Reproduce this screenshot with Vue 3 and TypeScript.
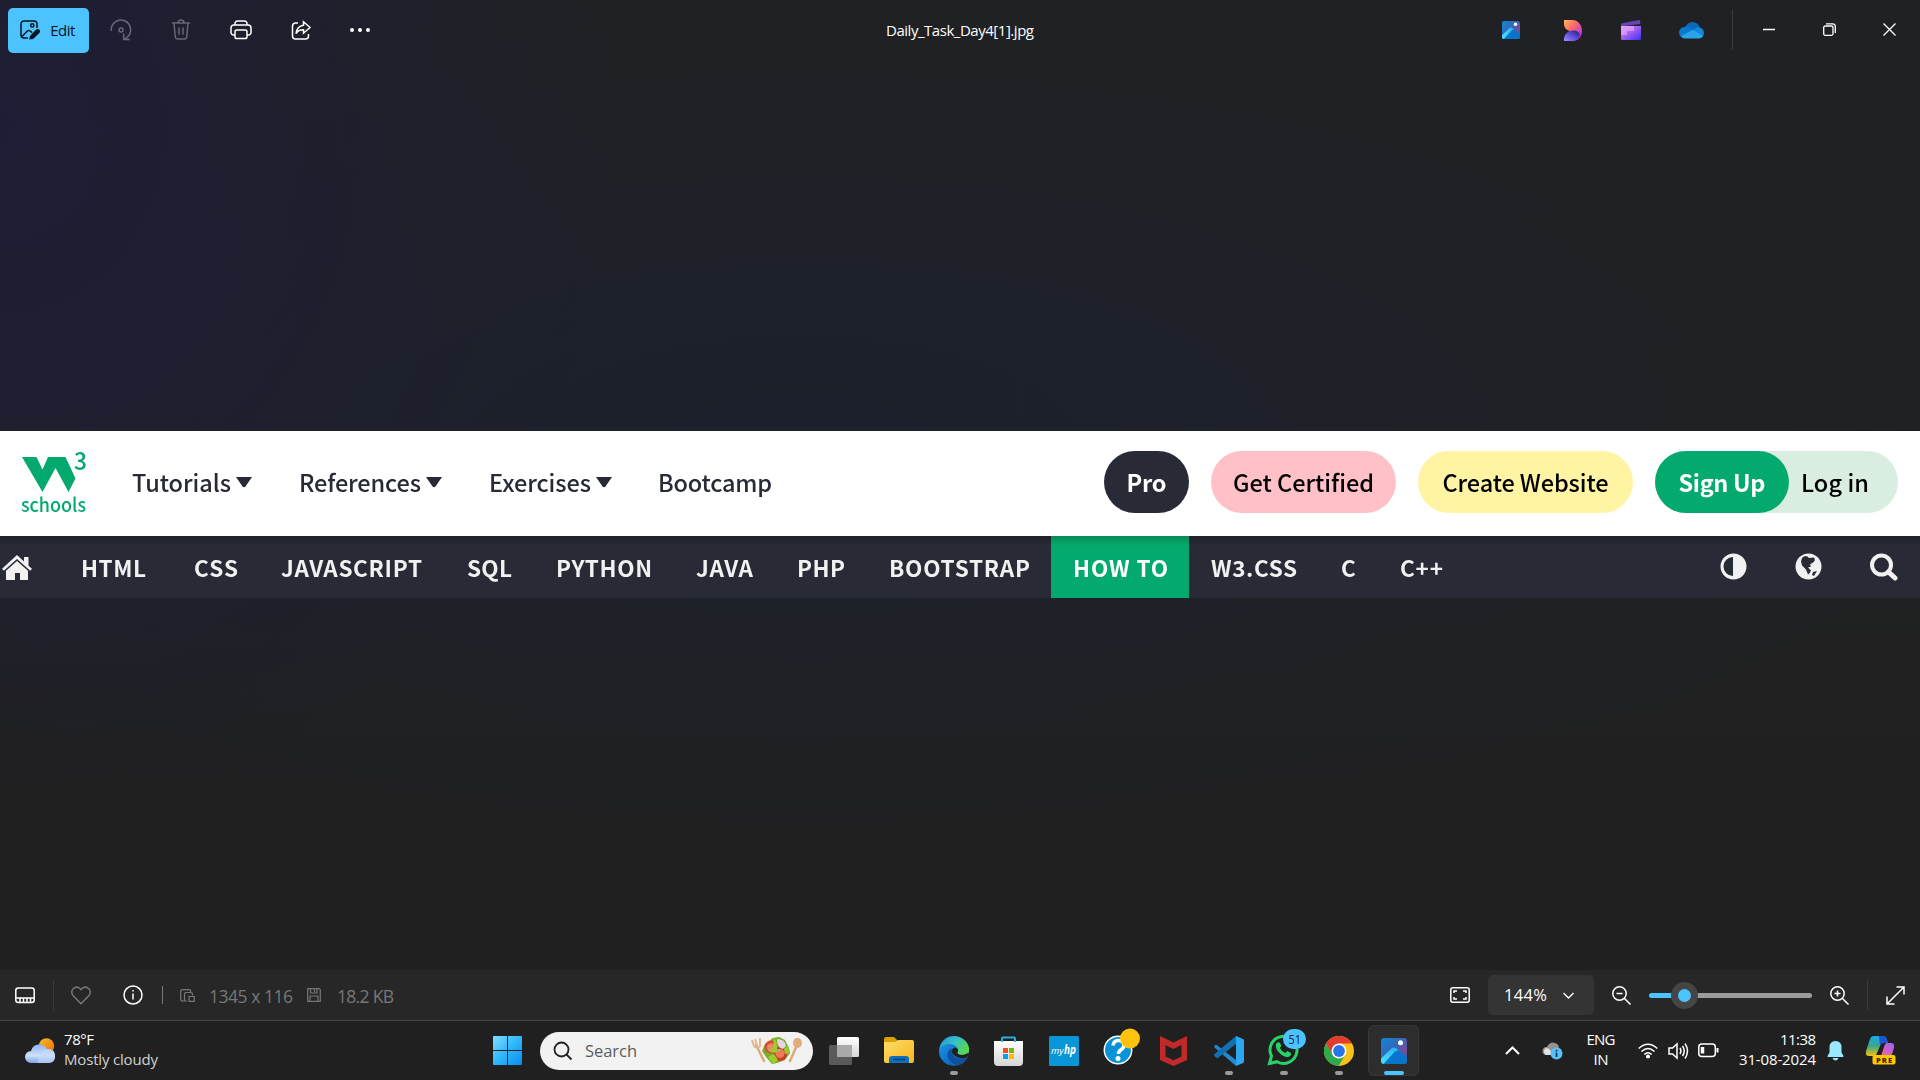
<script setup lang="ts">
interface Label {
  text: string
  gap: number
  width: number
}

const menus: (Label & { caret: number })[] = [
  { text: 'Tutorials', gap: 0, width: 99, caret: 16 },
  { text: 'References', gap: 47, width: 122, caret: 16 },
  { text: 'Exercises', gap: 47, width: 102, caret: 16 },
  { text: 'Bootcamp', gap: 46, width: 114, caret: 0 },
]

const topics: (Label & { active?: boolean })[] = [
  { text: 'HTML', gap: 48, width: 65 },
  { text: 'CSS', gap: 48, width: 44 },
  { text: 'JAVASCRIPT', gap: 43, width: 141 },
  { text: 'SQL', gap: 45, width: 45 },
  { text: 'PYTHON', gap: 44, width: 96 },
  { text: 'JAVA', gap: 44, width: 57 },
  { text: 'PHP', gap: 44, width: 48 },
  { text: 'BOOTSTRAP', gap: 44, width: 141 },
  { text: 'HOW TO', gap: 43, width: 95, active: true },
  { text: 'W3.CSS', gap: 43, width: 86 },
  { text: 'C', gap: 44, width: 16 },
  { text: 'C++', gap: 43, width: 43 },
]

// Spreads or tightens the letters so that a label fills its own box.
const vFit = {
  mounted(el: HTMLElement) {
    const range = document.createRange()
    range.selectNodeContents(el)
    const natural = range.getBoundingClientRect().width
    const count = (el.textContent ?? '').trim().length
    if (count > 1) {
      el.style.letterSpacing = `${(el.clientWidth - natural) / (count - 1)}px`
    }
  },
}
</script>

<template>
  <div class="desktop">
    <header class="titlebar">
      <button class="edit">
        <svg width="21" height="21" viewBox="0 0 21 21">
          <path d="M8 18H4a3 3 0 0 1-3-3V4a3 3 0 0 1 3-3h10a3 3 0 0 1 3 3v4" />
          <circle cx="12.3" cy="5.4" r="1.6" />
          <path d="M2 16.5 7.3 11q1.500-1.200 3 0l1.800 1.700" />
          <path d="M9 19.600l1.200-3.800 6-6.200q2-1.200 3.400.3 1.200 1.600-.2 3l-6.300 6z" fill="#06141c" stroke="none" />
        </svg>
        <span v-fit class="w25">Edit</span>
      </button>
      <div class="cells commands">
        <span class="cell dim">
          <svg width="22" height="22" viewBox="0 0 22 22">
            <path d="M1.3 12A9.7 9.7 0 1 1 17 18.3l-3 2.2M13.7 14.5v6h6" />
            <circle cx="11" cy="11" r="2" />
          </svg>
        </span>
        <span class="cell dim">
          <svg width="20" height="22" viewBox="0 0 20 22">
            <path d="M1 4h18M7 4a3 3 0 0 1 6 0M3 4l1.3 14q.3 2 2.2 2h7q2 0 2.2-2L17 4M8 8.5v7M12 8.5v7" />
          </svg>
        </span>
        <span class="cell">
          <svg width="22" height="20" viewBox="0 0 22 20">
            <path d="M5 5V3.500A2.500 2.500 0 0 1 7.500 1h7A2.500 2.500 0 0 1 17 3.500V5M5 15H3.500A2.500 2.500 0 0 1 1 12.500V8a3 3 0 0 1 3-3h14a3 3 0 0 1 3 3v4.500A2.500 2.500 0 0 1 18.500 15H17" />
            <rect x="5" y="10" width="12" height="8.500" rx="1.800" />
          </svg>
        </span>
        <span class="cell">
          <svg width="21" height="21" viewBox="0 0 21 21">
            <path d="M7 3H4.500A3 3 0 0 0 1.500 6v10a3 3 0 0 0 3 3h10a3 3 0 0 0 3-3v-2M12.500 1.800l6.500 5.700-6.500 5.700V9.800q-5-.2-7.500 3.700 1-7.500 7.500-8.300z" />
          </svg>
        </span>
        <span class="cell dots">
          <svg class="solid" width="22" height="6" viewBox="0 0 22 6">
            <circle cx="3" cy="3" r="2" /><circle cx="11" cy="3" r="2" /><circle cx="19" cy="3" r="2" />
          </svg>
        </span>
      </div>
      <div class="filename"><span v-fit class="w148">Daily_Task_Day4[1].jpg</span></div>
      <div class="cells">
        <span class="cell">
          <svg class="art" width="18" height="18" viewBox="0 0 26 26"><use href="#photos" /></svg>
        </span>
        <span class="cell nudge">
          <svg class="art" width="18" height="21" viewBox="0 0 18 21">
            <path d="M0 0h8c6 0 10 5 10 10.500S15 21 8 21L5 10.800Q0 9 0 4z" fill="url(#designerTop)" />
            <path d="M0 21C-.5 14 4 10.500 9 10.500S16.500 13 15.500 17Q13 21 7 21z" fill="url(#designerLow)" />
          </svg>
        </span>
        <span class="cell">
          <svg class="art" width="20" height="21" viewBox="0 0 20 21">
            <path d="M0 4.500Q0 3.500 1 3.200L18 0q1-.1 1.200 1v3L0 6.500z" fill="#6644b8" />
            <path d="M0 6h20v12.500q0 1.500-1.500 1.500h-17Q0 20 0 18.500z" fill="url(#clip)" />
            <path d="M0 6h13v5H0zM0 11h6v4H0z" fill="#efb4ff" opacity=".55" />
          </svg>
        </span>
        <span class="cell">
          <svg class="art" width="25" height="17" viewBox="0 0 25 17"><use href="#onedrive" /></svg>
        </span>
      </div>
      <i class="rule tall"></i>
      <div class="cells window">
        <span class="cell"><svg width="12" height="12" viewBox="0 0 12 12"><path d="M0 6.500h12" /></svg></span>
        <span class="cell">
          <svg class="thin" width="13" height="13" viewBox="0 0 13 13">
            <rect x=".7" y="3" width="9.300" height="9.300" rx="1.500" />
            <path d="M3 .8h6.500q2.800 0 2.800 2.800V10" />
          </svg>
        </span>
        <span class="cell"><svg class="thin" width="13" height="13" viewBox="0 0 13 13"><path d="M.5.5l12 12M12.500.5l-12 12" /></svg></span>
      </div>
    </header>

    <main class="canvas">
      <section class="picture">
        <div class="site">
          <svg class="logo" width="68" height="66" viewBox="0 0 68 66">
            <path d="M1 7h14.500l6 12.500L27 7h17.500l10 21.500L47.500 42 34.500 18 21.500 42z" fill="#04aa6d" />
            <text x="53" y="19.500" font-size="25" textLength="13" lengthAdjust="spacingAndGlyphs">3</text>
            <text x="0" y="62" font-size="19" textLength="65" lengthAdjust="spacingAndGlyphs">schools</text>
          </svg>
          <div class="menus">
            <span v-for="m in menus" :key="m.text" class="menu" :style="{ marginLeft: m.gap + 'px' }">
              <span v-fit class="word" :style="{ width: m.width + 'px' }">{{ m.text }}</span>
              <svg v-if="m.caret" :width="m.caret" height="11" viewBox="0 0 16 11"><path d="M0 0h16L9.500 9.500q-1.500 1.500-3 0z" fill="#282a35" /></svg>
            </span>
          </div>
          <div class="pills">
            <span class="pill pro"><span v-fit class="word">Pro</span></span>
            <span class="pill cert"><span v-fit class="word">Get Certified</span></span>
            <span class="pill create"><span v-fit class="word">Create Website</span></span>
            <span class="account">
              <span class="pill signup"><span v-fit class="word">Sign Up</span></span>
              <span class="login"><span v-fit class="word">Log in</span></span>
            </span>
          </div>
        </div>
        <nav class="topics">
          <svg class="home" width="30" height="25" viewBox="0 0 30 25">
            <path d="M15 0 22 6.500V2h4.500v8.700l3.500 3.100-1.800 2L15 4 1.800 15.800 0 13.800z" />
            <path d="M15 6 26 15.800V25h-8v-7h-5v7H4v-9.200z" />
          </svg>
          <span
            v-for="t in topics"
            :key="t.text"
            class="topic"
            :class="{ active: t.active }"
            :style="{ paddingLeft: t.gap - 21 + 'px' }"
          ><span v-fit class="word" :style="{ width: t.width + 'px' }">{{ t.text }}</span></span>
          <div class="tools">
            <svg width="27" height="27" viewBox="0 0 27 27">
              <path fill-rule="evenodd" d="M13.500.5a13 13 0 1 0 0 26 13 13 0 0 0 0-26zM13 4v19a9.500 9.500 0 0 1 0-19z" />
            </svg>
            <svg width="27" height="27" viewBox="0 0 27 27">
              <circle cx="13.500" cy="13.500" r="13" />
              <path class="land" d="M7 5q4-4 7 0l5-.5q2 3-1 5l-3 2 1 2-3 1 3 3q-1 3-3 4l-2-5-4-4-1-4zM18 19l4-1-3 5-2-1z" />
            </svg>
            <svg width="29" height="28" viewBox="0 0 29 28">
              <circle class="ring" cx="11.500" cy="12" r="9.500" />
              <path class="handle" d="m18.500 19 6.500 6" />
            </svg>
          </div>
        </nav>
      </section>
    </main>

    <footer class="status">
      <span class="cell film">
        <svg width="20" height="17" viewBox="0 0 20 17">
          <rect x=".8" y="1" width="18.400" height="14.500" rx="2.500" />
          <path d="M1 11h18M5 11v4M8.500 11v4M12 11v4M15.500 11v4" />
        </svg>
      </span>
      <i class="rule short"></i>
      <svg class="heart" width="20" height="19" viewBox="0 0 20 19">
        <path d="M10 17.800 2.200 9.800a4.900 4.900 0 0 1 0-7q3.500-3.300 7 0l.8.900.8-.9q3.500-3.300 7 0a4.900 4.900 0 0 1 0 7z" />
      </svg>
      <svg class="info" width="20" height="20" viewBox="0 0 20 20">
        <circle cx="10" cy="10" r="9" /><path d="M10 8.500v6M10 5v1.600" />
      </svg>
      <i class="rule light"></i>
      <svg class="resize faint" width="15" height="13" viewBox="0 0 15 13">
        <path d="M7 12H2.500Q.7 12 .7 10V2.800Q.7.7 2.700.7H9q1.700 0 1.700 1.800v1M4.500 12V5q0-1.500 1.500-1.500h5q1.500 0 1.500 1.500v1.500M9 7.500h5.300v4.800H9z" />
      </svg>
      <span v-fit class="meta dims">1345 x 116</span>
      <svg class="disk faint" width="14" height="14" viewBox="0 0 14 14">
        <path d="M.7.7h11.600l1 1v11.600H.7zM3.500.7V5h6.500V.7M3 13V8h8v5M7.500 1.500V4" />
      </svg>
      <span v-fit class="meta size">18.2 KB</span>
      <div class="zoom">
        <svg width="20" height="16" viewBox="0 0 20 16">
          <rect x=".8" y=".8" width="18.400" height="14.400" rx="2" />
          <path d="M4 6V4h3M13 4h3v2M16 10v2h-3M7 12H4v-2" />
        </svg>
        <span class="percent">
          <span v-fit>144%</span>
          <svg class="thin chev" width="11" height="7" viewBox="0 0 11 7"><path d="m.5 1 5 5 5-5" /></svg>
        </span>
        <svg class="lens" width="19" height="19" viewBox="0 0 19 19"><circle cx="7.500" cy="7.500" r="6.700" /><path d="m12.500 12.500 6 6M4.500 7.500h6" /></svg>
        <span class="slider"><i class="track"></i><i class="thumb"></i></span>
        <svg class="lens plus" width="19" height="19" viewBox="0 0 19 19"><circle cx="7.500" cy="7.500" r="6.700" /><path d="m12.500 12.500 6 6M4.500 7.500h6M7.500 4.500v6" /></svg>
        <i class="rule short"></i>
        <svg class="expand" width="19" height="19" viewBox="0 0 19 19"><path d="M1 18 18 1M10.500 1H18v7.500M1 10.500V18h7.500" /></svg>
      </div>
    </footer>

    <div class="taskbar">
      <div class="weather">
        <svg class="art" width="31" height="26" viewBox="0 0 31 26">
          <circle cx="21.500" cy="8" r="7.700" fill="url(#sun)" />
          <path d="M6 25a6 6 0 0 1 0-12Q8 5.500 15 6.500q5 .5 7 4.500 7-1 8 6t-6 8z" fill="url(#cloud)" />
          <path d="M15 18q2-7 8-7 7 .5 7 7-.5 6-6 7H12z" fill="#c4d8fa" opacity=".6" />
        </svg>
        <div class="lines"><span v-fit class="w30">78°F</span><span v-fit class="w94 soft">Mostly cloudy</span></div>
      </div>
      <svg class="art start" width="29" height="29" viewBox="0 0 29 29">
        <path d="M0 1q0-1 1-1h13v14H0zM15 0h13q1 0 1 1v13H15zM0 15h14v14H1q-1 0-1-1zM15 15h14v13q0 1-1 1H15z" fill="url(#win)" />
      </svg>
      <div class="search">
        <svg width="20" height="20" viewBox="0 0 20 20"><circle cx="8.500" cy="8.500" r="7" /><path d="m13.500 13.500 5 5" /></svg>
        <span v-fit class="w52">Search</span>
        <svg class="art salad" width="52" height="28" viewBox="0 0 52 28">
          <path d="m5 8 8 16" stroke="#e0a878" stroke-width="2.500" stroke-linecap="round" />
          <path d="m1 3 2 6q3 3 6 0V1M4 2l2 6" fill="none" stroke="#e8b68c" stroke-width="2" />
          <path d="m46 8-7 16" stroke="#e0a878" stroke-width="2.500" stroke-linecap="round" />
          <ellipse cx="46.500" cy="6" rx="4.500" ry="5" fill="#e3aa7a" />
          <path d="M14 7 22 1l6-1 6 3 4 8 1 5-5 7-8 3-5 1-6-7-4-6z" fill="#78ae25" />
          <circle cx="20" cy="10" r="6.500" fill="#d94a32" /><circle cx="20" cy="10.500" r="4" fill="#ee8763" />
          <circle cx="29" cy="17" r="7" fill="#c83c29" /><circle cx="29" cy="16.500" r="4.500" fill="#ed7b5a" />
          <path d="M26 2q8 0 9 7l-3 3q-6-1-6-10z" fill="#e9d2e5" /><path d="M23 1q4 5 3 11l5 1-8 3-6-2 5-3zM17 20l6-3 4 6-5 4zM33 12l4-3 1 7-4 1z" fill="#9bcd32" />
        </svg>
      </div>
      <div class="apps">
        <span class="app">
          <svg class="art" width="30" height="28" viewBox="0 0 30 28">
            <rect x="8" y="0" width="22" height="20" rx="1.500" fill="url(#paper)" />
            <rect x="0" y="8" width="23" height="20" rx="1.500" fill="#5a5a5a" /><path d="M8 8h15v12H8z" fill="#a9a9a9" />
          </svg>
        </span>
        <span class="app">
          <svg class="art" width="30" height="27" viewBox="0 0 30 27">
            <path d="M0 2Q0 0 2 0h8l3 3v6H0z" fill="#dea000" /><path d="M0 5h11l3-2h14q2 0 2 2v19q0 2-2 2H2q-2 0-2-2z" fill="url(#folder)" />
            <path d="M5 26v-4q0-3 3-3h14q3 0 3 3v4z" fill="#0c70bf" /><path d="M9 22.500h12" stroke="#073d6e" stroke-width="1.500" />
          </svg>
        </span>
        <span class="app open">
          <svg class="art" width="30" height="30" viewBox="0 0 30 30">
            <circle cx="15" cy="15" r="15" fill="url(#edgeBlue)" />
            <path d="M1 11C4 1 14-2 22 2c7 3 10 11 7 16-2 3-7 4-11 2-1-1 1-2 1-5 0-4-4-7-8-7-5 0-9 2-10 5z" fill="url(#edgeGreen)" />
            <path d="M12 12q-5 5-3 10 3 6 10 7 6-1 9-7-10 4-14-3-2-3-2-7z" fill="#12509b" />
            <path d="M30 18q-1 5-9 4-8-2-8.500-7.500 2-4 5-2.500 3 2 .5 5 4 4 11 0z" fill="#202020" />
          </svg>
        </span>
        <span class="app">
          <svg class="art" width="29" height="30" viewBox="0 0 29 30">
            <path d="M0 5h29v21q0 4-4 4H4q-4 0-4-4z" fill="url(#paper)" />
            <path d="M8 6V2.500q0-1 1-1h11q1 0 1 1V6" fill="none" stroke="#2aaee6" stroke-width="2" />
            <path d="M9 12h5v5H9z" fill="#f25022" /><path d="M15 12h5v5h-5z" fill="#7fba00" /><path d="M9 18h5v5H9z" fill="#00a4ef" /><path d="M15 18h5v5h-5z" fill="#ffb900" />
          </svg>
        </span>
        <span class="app">
          <svg class="art" width="30" height="30" viewBox="0 0 30 30">
            <rect width="30" height="30" rx="1.500" fill="#0896d7" />
            <text x="2" y="18" class="my" textLength="12.500" lengthAdjust="spacingAndGlyphs">my</text>
            <text x="15" y="18" class="hp" textLength="12" lengthAdjust="spacingAndGlyphs">hp</text>
          </svg>
        </span>
        <span class="app">
          <svg class="art help" width="38" height="38" viewBox="0 0 38 38">
            <circle cx="18" cy="22" r="13.700" fill="#0793d5" stroke="#fff" stroke-width="1.500" />
            <path d="M13 17.500q.5-5 5.500-5t5.500 4.500q0 3-3 4.800-2.500 1.500-2.500 4.200" fill="none" stroke="#fff" stroke-width="3.600" />
            <circle cx="18" cy="30.500" r="2.500" fill="#fff" />
            <circle cx="30" cy="10.500" r="10" fill="#ffc20e" />
          </svg>
        </span>
        <span class="app">
          <svg class="art" width="27" height="30" viewBox="0 0 27 30"><path d="M0 0l13.500 6.500L27 0v24l-13.500 6L0 24zM5.500 9v11.500l8 3.700 8-3.700V9l-8 4z" fill="#c12a2b" fill-rule="evenodd" /></svg>
        </span>
        <span class="app open">
          <svg class="art" width="30" height="30" viewBox="0 0 30 30">
            <path d="M2 8.500 22 24v6L.5 11.500Q-.5 10 2 8.500z" fill="#2489ca" /><path d="M2 21.500.5 20q-1-1 0-2L22 0v8L4.500 21.500q-1 1-2.500 0z" fill="#1070b3" />
            <path d="M22 0l7 3q1 .5 1 2v20q0 1.500-1 2l-7 3z" fill="#2aa8f2" />
          </svg>
        </span>
        <span class="app open">
          <svg class="art wa" width="40" height="38" viewBox="0 0 40 38">
            <path d="M6.500 35.500l2-7.500A13.500 13.500 0 1 1 14 33.700z" fill="none" stroke="#25d366" stroke-width="3" />
            <path d="M13 16q2-3 4-1l1.300 3-1.500 2q2 3.800 5.500 5l2-2 3.700 2q.5 3-3 4-4 .5-8.500-4T13 16z" fill="#25d366" />
            <rect x="20" y="1" width="23" height="20" rx="10" fill="#4cc2ff" />
            <text x="25.500" y="16" class="count" textLength="12.500" lengthAdjust="spacingAndGlyphs">51</text>
          </svg>
        </span>
        <span class="app open">
          <svg class="art" width="30" height="30" viewBox="0 0 30 30">
            <circle cx="15" cy="15" r="15" fill="#fbc116" /><path d="M2 7.500A15 15 0 0 1 28 7.500H15L8.500 19z" fill="#e33b2e" /><path d="M2 7.500a15 15 0 0 0 12.500 22.500l7-11.500h-13z" fill="#2da94f" />
            <circle cx="15" cy="15" r="7.500" fill="#fff" /><circle cx="15" cy="15" r="5.900" fill="#2a74ea" />
          </svg>
        </span>
        <span class="app open current"><svg class="art" width="26" height="26" viewBox="0 0 26 26"><use href="#photos" /></svg></span>
      </div>
      <div class="tray">
        <svg class="up" width="15" height="9" viewBox="0 0 15 9"><path d="m1 8 6.500-6.500L14 8" stroke-width="2" /></svg>
        <svg class="art sync" width="21" height="18" viewBox="0 0 21 18">
          <path d="M4 13a4 4 0 0 1 1-8Q8-1 13 1q4 1 4 5 3 1 2 4l-5 3z" fill="#929292" /><path d="M4 13a4 4 0 0 1 0-7q5 0 6 7z" fill="#e2e2e2" />
          <circle cx="14.500" cy="11.500" r="6" fill="#58c1fb" /><path d="M14.500 10.500v4.500M14.500 7.800v1.600" stroke="#083b58" stroke-width="1.700" />
        </svg>
        <div class="lines lang"><span v-fit class="w29">ENG</span><span v-fit class="w15">IN</span></div>
        <svg class="wifi" width="20" height="16" viewBox="0 0 20 16"><path d="M.7 5.500q9.300-8.500 18.600 0M3.500 8.500q6.500-6 13 0M6.300 11.500q3.700-3.500 7.400 0" /><circle cx="10" cy="13.500" r="1.300" fill="#fff" /></svg>
        <svg class="vol" width="21" height="18" viewBox="0 0 21 18"><path d="M1 6h3.500L9 2v14l-4.500-4H1zM12 6q2 3 0 6M14.500 4q3.500 5 0 10M17 1.500q5 7.500 0 15" /></svg>
        <svg class="bat" width="21" height="15" viewBox="0 0 21 15"><rect x=".8" y="1" width="16.500" height="12.500" rx="3" /><path d="M19.500 5v4.500" stroke-width="2" /><path d="M4.500 4v6.500" stroke-width="3.500" /></svg>
        <div class="lines clock"><span v-fit class="w36">11:38</span><span v-fit class="w77">31-08-2024</span></div>
        <svg class="art bell" width="17" height="20" viewBox="0 0 17 20"><path d="M8.500 0q6 0 6 6.500v5l2 3.500q.5 1-1 1h-14q-1.500 0-1-1l2-3.500v-5Q2.500 0 8.500 0zM5.500 17h6q-1 2.500-3 2.500t-3-2.500z" fill="#99e8fd" /></svg>
        <svg class="art copilot" width="30" height="30" viewBox="0 0 30 30">
          <path d="M8 0h9q3 0 4 4l1 3h-5q-2 0-3 3l-3 7q-1 3-4 3H3q-4 0-3-5L4 3q1-3 4-3z" fill="url(#copA)" />
          <path d="M21 7h4q4 0 3 5l-3 9q-1 4-5 4h-9q3-1 4-5l3-9q1-4 3-4z" fill="url(#copB)" />
          <path d="M13 0h4q3 0 4 4l1 3h-5q-2 0-3 3z" fill="#1c55d2" />
          <rect x="6.500" y="19" width="23" height="9.500" rx="2" fill="#ffc900" />
          <text x="10" y="26.500" class="pre" textLength="16">PRE</text>
        </svg>
      </div>
    </div>

    <svg class="defs" width="0" height="0">
      <defs>
        <linearGradient id="photoBg" x1="0" y1="0" x2="1" y2="1"><stop stop-color="#0b8bd8" /><stop offset=".45" stop-color="#3a64b6" /><stop offset=".7" stop-color="#74509d" /><stop offset="1" stop-color="#1768b8" /></linearGradient>
        <linearGradient id="peak" x1="0" y1="1" x2="1" y2="0"><stop stop-color="#4fe2ff" /><stop offset="1" stop-color="#23b1ee" /></linearGradient>
        <symbol id="photos" viewBox="0 0 26 26">
          <rect width="26" height="26" rx="3" fill="url(#photoBg)" />
          <path d="M2 25 11.500 10.500q2-2 4 0L26 19.500V23q0 3-3 3H3z" fill="#0874cc" />
          <path d="M0 20.500 10.500 10.500q2.500-2 5 0l2 2q-2-.5-4 1.500L2.500 26Q0 25.500 0 23z" fill="url(#peak)" />
          <circle cx="19.500" cy="4.800" r="2.500" fill="#fff" />
        </symbol>
        <symbol id="onedrive" viewBox="0 0 25 17">
          <path d="M6 5q3-5 8-5 6 1 7 6l-9 6z" fill="#0b68b8" /><path d="M6 5q4-1 7 2l8 9H6q-6 0-6-6 1-5 6-5z" fill="#0c79d0" />
          <path d="M14 8q4-4 8-2 4 2 2.500 7-1 3-4.500 3l-9-5z" fill="#1487da" /><path d="M2 14 14 8l10 6q-1.500 2.500-4 2.500H6q-3 0-4-2.500z" fill="#28a5ea" />
        </symbol>
        <linearGradient id="designerTop" x1="0" y1="0" x2="1" y2="1"><stop stop-color="#ffb84d" /><stop offset=".4" stop-color="#ff6a68" /><stop offset=".8" stop-color="#b838db" /></linearGradient>
        <linearGradient id="designerLow" x1="0" y1="1" x2="1" y2="0"><stop stop-color="#a98cff" /><stop offset=".5" stop-color="#5c4edb" /><stop offset="1" stop-color="#261a6a" /></linearGradient>
        <linearGradient id="clip" x1="0" y1="0" x2="1" y2="1"><stop stop-color="#e58cf5" /><stop offset=".5" stop-color="#9a5df2" /><stop offset="1" stop-color="#3d2ff0" /></linearGradient>
        <linearGradient id="sun" x1="0" y1="0" x2="1" y2="1"><stop stop-color="#f6bd2c" /><stop offset="1" stop-color="#ee6a05" /></linearGradient>
        <linearGradient id="cloud" x1="0" y1="0" x2="0" y2="1"><stop stop-color="#8db3f2" /><stop offset=".6" stop-color="#cfe0fb" /><stop offset="1" stop-color="#7fa5e8" /></linearGradient>
        <linearGradient id="win" x1="0" y1="0" x2="1" y2="1"><stop stop-color="#83dcff" /><stop offset=".5" stop-color="#2db8fb" /><stop offset="1" stop-color="#0a8dec" /></linearGradient>
        <linearGradient id="paper" x1="0" y1="0" x2="0" y2="1"><stop stop-color="#fff" /><stop offset="1" stop-color="#d5d5d5" /></linearGradient>
        <linearGradient id="folder" x1="0" y1="0" x2="1" y2="1"><stop stop-color="#ffdd6d" /><stop offset="1" stop-color="#f8b51c" /></linearGradient>
        <linearGradient id="edgeBlue" x1="0" y1="0" x2="1" y2="1"><stop stop-color="#249cde" /><stop offset=".5" stop-color="#0d78d2" /><stop offset="1" stop-color="#104a94" /></linearGradient>
        <linearGradient id="edgeGreen" x1="0" y1="0" x2="1" y2=".5"><stop stop-color="#2196d6" /><stop offset=".5" stop-color="#35bfc9" /><stop offset="1" stop-color="#5ad94a" /></linearGradient>
        <linearGradient id="copA" x1="0" y1="0" x2="0" y2="1"><stop stop-color="#1ca8ee" /><stop offset=".5" stop-color="#39a688" /><stop offset="1" stop-color="#f2c30f" /></linearGradient>
        <linearGradient id="copB" x1="1" y1="0" x2="0" y2="1"><stop stop-color="#9a62f4" /><stop offset=".5" stop-color="#d862bd" /><stop offset="1" stop-color="#ff8050" /></linearGradient>
      </defs>
    </svg>
  </div>
</template>

<style>
body {
  margin: 0;
  background: #202020;
}
</style>

<style scoped>
.desktop {
  width: 1920px;
  height: 1080px;
  display: flex;
  flex-direction: column;
  overflow: hidden;
  color: #fff;
  font: 15px/20px 'Open Sans', 'Noto Sans', sans-serif;
  background:
    radial-gradient(ellipse 620px 700px at 0 130px, rgba(29, 29, 56, 0.9), transparent),
    radial-gradient(ellipse 1150px 430px at 800px 440px, rgba(27, 32, 46, 0.85), transparent),
    linear-gradient(#202124, #202122 55%, #202020 75%);
}
span,
svg,
i {
  flex: none;
}
span {
  display: block;
  white-space: nowrap;
}
svg {
  display: block;
  fill: none;
  stroke: #fff;
  stroke-width: 1.5;
  overflow: visible;
}
svg.art,
svg.solid,
.picture svg {
  stroke: none;
}
svg.solid {
  fill: #fff;
}
svg.thin {
  stroke-width: 1.3;
}
.defs {
  position: absolute;
}
.w15 { width: 15px; }
.w25 { width: 25px; }
.w29 { width: 29px; }
.w30 { width: 30px; }
.w36 { width: 36px; }
.w52 { width: 52px; }
.w77 { width: 77px; }
.w94 { width: 94px; }
.w148 { width: 148px; }

.titlebar {
  height: 60px;
  display: flex;
  align-items: center;
}
.edit {
  width: 81px;
  height: 45px;
  margin: 0 2px 0 8px;
  padding: 0 0 0 12px;
  display: flex;
  align-items: center;
  gap: 9px;
  border: 0;
  border-radius: 5px;
  background: #4cc2ff;
  color: #06141c;
  font: inherit;
}
.edit svg {
  stroke: #06141c;
}
.cells {
  display: flex;
  align-items: center;
}
.cell {
  width: 60px;
  display: flex;
  align-items: center;
  justify-content: center;
}
.cell.nudge {
  padding-left: 4px;
  box-sizing: border-box;
}
.cell.dots {
  width: 57px;
}
.dim svg {
  stroke: #686777;
}
.filename {
  margin-left: 498px;
  flex: 1;
}
.rule {
  width: 1px;
  background: #3a3a3a;
}
.rule.tall {
  height: 40px;
  margin: 0 6px 0 11px;
}
.window {
  margin: 0 1px 2px 0;
}

.canvas {
  height: 910px;
  display: flex;
  flex-direction: column;
}
.picture {
  margin-top: 371px;
  height: 167px;
  font: 500 23.5px/30px 'Noto Sans CJK SC', 'Noto Sans', sans-serif;
}
.site {
  height: 105px;
  display: flex;
  background: #fff;
  color: #282a35;
}
.picture .word,
.picture svg {
  filter: blur(0.35px);
}
.site .word {
  margin-bottom: 1px;
}
.logo {
  margin: 19px 0 0 21px;
}
.logo text {
  fill: #04aa6d;
  font-weight: 500;
}
.menus {
  margin: 20px 0 0 43px;
  height: 62px;
  display: flex;
  flex: 1;
}
.menu {
  display: flex;
  align-items: center;
  gap: 5px;
}
.pills {
  margin: 20px 22px 0 0;
  height: 62px;
  display: flex;
  gap: 22px;
}
.pill,
.login {
  display: flex;
  align-items: center;
  justify-content: center;
  box-sizing: border-box;
  border-radius: 31px;
  color: #000;
}
.pill.pro {
  width: 85px;
  background: #282a35;
  color: #fff;
  font-weight: 700;
}
.pro .word { width: 40px; }
.cert {
  width: 185px;
  background: #ffc0c7;
}
.cert .word { width: 141px; }
.create {
  width: 215px;
  background: #fff4a3;
}
.create .word { width: 166px; }
.account {
  display: flex;
  width: 243px;
  border-radius: 31px;
  background: #d9eee1;
}
.pill.signup {
  width: 134px;
  background: #04aa6d;
  color: #fff;
  font-weight: 700;
}
.signup .word { width: 87px; }
.login {
  margin-left: 12px;
}
.login .word { width: 68px; }
.topics {
  height: 62px;
  display: flex;
  align-items: center;
  background: linear-gradient(#20212a, #282a35 10px);
  color: #f1f1f1;
  font-weight: 700;
  font-size: 22.5px;
}
.topics svg {
  fill: #f1f1f1;
}
.topics .land {
  fill: #282a35;
}
.ring,
.handle {
  fill: none;
  stroke: #f1f1f1;
  stroke-width: 4;
}
.handle {
  stroke-width: 5;
  stroke-linecap: round;
}
.home {
  margin: 1px 0 0 2px;
}
.home + .topic {
  margin-left: 22px;
}
.topic {
  height: 62px;
  display: flex;
  align-items: center;
  padding-right: 21px;
}
.topic.active {
  background: linear-gradient(#078b5b, #04aa6d 10px);
  color: #fff;
}
.tools {
  margin: 0 21px 0 auto;
  display: flex;
  gap: 48px;
}

.status {
  height: 50px;
  display: flex;
  align-items: center;
  background: #272727;
  border-bottom: 1px solid #464646;
}
.cell.film {
  width: 20px;
  margin: 0 18px 0 15px;
}
.rule.short {
  height: 30px;
}
.heart {
  margin-left: 17px;
}
svg.heart,
svg.faint {
  stroke: #777;
}
svg.faint {
  stroke-width: 1.2;
}
.info {
  margin-left: 32px;
}
.rule.light {
  height: 18px;
  margin: 0 17px 0 19px;
  background: #777;
}
.meta {
  color: #777;
  font-size: 17.5px;
  margin-top: 2px;
}
.dims {
  width: 84px;
  margin-left: 14px;
}
.disk {
  margin-left: 14px;
}
.size {
  width: 57px;
  margin-left: 16px;
}
.zoom {
  margin-left: auto;
  display: flex;
  align-items: center;
}
.percent {
  width: 90px;
  height: 40px;
  margin: 0 18px;
  padding-left: 16px;
  display: flex;
  align-items: center;
  gap: 16px;
  border-radius: 5px;
  background: #343434;
  font-size: 16.5px;
}
.percent span {
  width: 43px;
}
.slider {
  position: relative;
  width: 163px;
  margin: 0 18px;
}
.track {
  display: block;
  height: 5px;
  border-radius: 3px;
  background: linear-gradient(90deg, #4cc2ff 36px, #9c9c9c 36px);
}
.thumb {
  position: absolute;
  left: 22px;
  top: -11px;
  width: 13px;
  height: 13px;
  border: 7px solid #454545;
  border-radius: 50%;
  background: #4cc2ff;
}
.plus + .rule {
  margin: 0 18px;
}
.expand {
  margin-right: 15px;
}

.taskbar {
  height: 59px;
  display: flex;
  align-items: center;
  background: #202020;
}
.weather {
  width: 468px;
  padding-left: 25px;
  display: flex;
  align-items: center;
  gap: 8px;
}
.lines {
  display: flex;
  flex-direction: column;
  margin-bottom: 4px;
}
.lines .soft {
  color: #d0d0d0;
}
.search {
  width: 260px;
  height: 38px;
  margin: 0 3px 0 18px;
  padding-left: 13px;
  display: flex;
  align-items: center;
  border-radius: 19px;
  background: #f2f2f2;
  color: #5c5c5c;
  font-size: 16.5px;
}
.search svg:first-child {
  stroke: #222;
  stroke-width: 1.8;
  margin-right: 12px;
}
.search .salad {
  margin-left: 114px;
}
.apps {
  display: flex;
}
.app {
  position: relative;
  width: 49px;
  height: 49px;
  margin: 0 3px;
  display: flex;
  align-items: center;
  justify-content: center;
  border-radius: 5px;
}
.app.current {
  background: #2d2d2d;
  box-shadow: 0 0 0 1px #363636;
}
.app.open::after {
  content: '';
  position: absolute;
  left: 21px;
  bottom: 0;
  width: 8px;
  height: 4px;
  border-radius: 2px;
  background: #9a9a9a;
}
.app.current::after {
  left: 15px;
  width: 20px;
  background: #4cc2ff;
}
.help {
  margin: -8px 0 0 0;
}
.wa {
  margin: -8px 0 0 -1px;
}
.my,
.hp {
  fill: #fff;
  font-style: italic;
}
.my { font-size: 8.5px; }
.hp { font-size: 13px; font-weight: 700; }
.count {
  fill: #10242f;
  font-size: 13.5px;
}
.pre {
  fill: #3b2600;
  font-size: 7.5px;
  font-weight: 800;
}
.tray {
  margin-left: auto;
  display: flex;
  align-items: center;
}
.sync { margin-left: 22px; }
.lang {
  width: 30px;
  margin-left: 23px;
  align-items: center;
}
.wifi { margin-left: 22px; }
.vol { margin-left: 10px; }
.bat { margin-left: 9px; }
.clock {
  margin-left: 20px;
  align-items: flex-end;
}
.bell { margin-left: 11px; }
.copilot { margin: 0 24px 0 22px; }
</style>
